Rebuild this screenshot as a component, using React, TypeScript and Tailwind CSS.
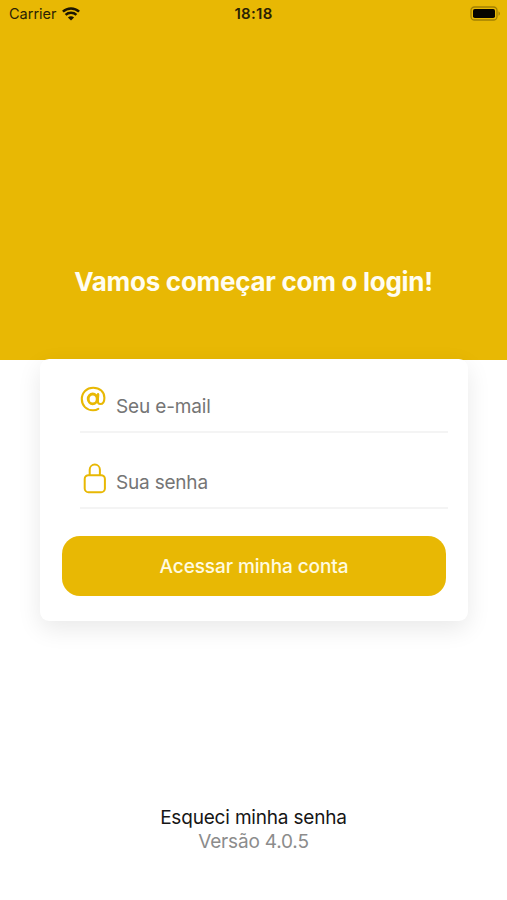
function WifiIcon() {
  return (
    <svg width="18" height="14" viewBox="0 0 18 14" fill="none" stroke="#1c1702" strokeWidth="2.5">
      <path d="M0.9 4.7C5.4.4 12.6.4 17.1 4.7" />
      <path d="M3.6 7.9C6.5 5.1 11.5 5.1 14.4 7.9" />
      <path d="M5.9 10.4C7.6 8.8 10.4 8.8 12.1 10.4L9 13.5Z" fill="#1c1702" stroke="none" />
    </svg>
  );
}

function BatteryIcon() {
  return (
    <svg width="31" height="15" viewBox="0 0 31 15" fill="none">
      <rect x="1" y="1" width="26" height="13" rx="3.5" stroke="#a18003" strokeWidth="1.3" />
      <rect x="3" y="3" width="22" height="9" rx="1.8" fill="#070500" />
      <path d="M28.5 5.2C30.4 6 30.4 9 28.5 9.8Z" fill="#a18003" />
    </svg>
  );
}

function AtIcon() {
  return (
    <svg width="26" height="26" viewBox="0 0 26 26" fill="none" stroke="#e8b804" strokeLinecap="round">
      <path
        d="M18.3 22.8C16.8 23.8 15 24.2 13 24.2C6.4 24.2 1.8 19.7 1.8 13.1C1.8 6.4 6.6 1.7 13.2 1.7C19.8 1.7 24.4 5.8 24.4 11.7C24.4 15.6 22.8 18 20.3 18C18.6 18 17.7 17 17.8 15.2L18.1 8.3"
        strokeWidth="2.1"
      />
      <ellipse cx="12.7" cy="12.9" rx="4.5" ry="4.9" strokeWidth="2.8" />
      <path d="M18 8.6L17.6 15.8" strokeWidth="2.5" />
    </svg>
  );
}

function LockIcon() {
  return (
    <svg width="24" height="31" viewBox="0 0 24 31" fill="none" stroke="#e8b804" strokeWidth="2">
      <rect x="1.7" y="12.2" width="20.2" height="17" rx="3.8" />
      <path d="M6.7 12.2V6.7a5.1 5.1 0 0 1 10.2 0v5.5" />
    </svg>
  );
}

export default function App() {
  return (
    <div className="flex h-[900px] w-[507px] flex-col bg-white font-['Inter',sans-serif]">
      <header className="flex h-[360px] shrink-0 flex-col bg-[#e8b804]">
        <div className="grid h-[27px] grid-cols-3 items-center pl-[9px] pr-[6px] text-[#2a2204]">
          <div className="flex items-center gap-[5px] text-[14.5px]">
            <span>Carrier</span>
            <WifiIcon />
          </div>
          <span className="pt-[2px] pr-[3px] text-center text-[15px] font-semibold tracking-[0.3px]">18:18</span>
          <div className="flex justify-end">
            <BatteryIcon />
          </div>
        </div>
        <h1 className="mt-[239px] text-center text-[26px] leading-8 font-bold tracking-[-0.28px] whitespace-nowrap text-[#fffdf2]">
          Vamos começar com o login!
        </h1>
      </header>

      <main className="relative mx-[40px] -mt-[1.5px] flex h-[262px] w-[427.5px] shrink-0 flex-col rounded-[9px] bg-white shadow-[0_8px_24px_rgba(0,0,0,0.09)]">
        <label className="ml-[40px] flex h-[74.5px] w-[367.5px] border-b-2 border-[#f4f4f4]">
          <span className="mt-[27px] w-[36px]">
            <AtIcon />
          </span>
          <span className="mt-[35px] text-[19px] leading-[26px] tracking-[-0.15px] text-[#757575]">Seu e-mail</span>
        </label>
        <label className="ml-[40px] flex h-[76px] w-[367.5px] border-b-2 border-[#f4f4f4]">
          <span className="mt-[30px] w-[36px] pl-[3px]">
            <LockIcon />
          </span>
          <span className="mt-[37px] text-[19px] leading-[26px] tracking-[-0.2px] text-[#757575]">Sua senha</span>
        </label>
        <button className="mt-[27px] ml-[22px] h-[60px] w-[384px] rounded-[18px] bg-[#e8b804] pt-[2px] text-[19px] font-medium tracking-[-0.1px] text-[#fffbe0]">
          Acessar minha conta
        </button>
      </main>

      <footer className="mt-[184px] text-center text-[19px] leading-[25px] tracking-[-0.18px]">
        <p className="text-[#161616]">Esqueci minha senha</p>
        <p className="-mt-px text-[#8c8c8c]">Versão 4.0.5</p>
      </footer>
    </div>
  );
}
